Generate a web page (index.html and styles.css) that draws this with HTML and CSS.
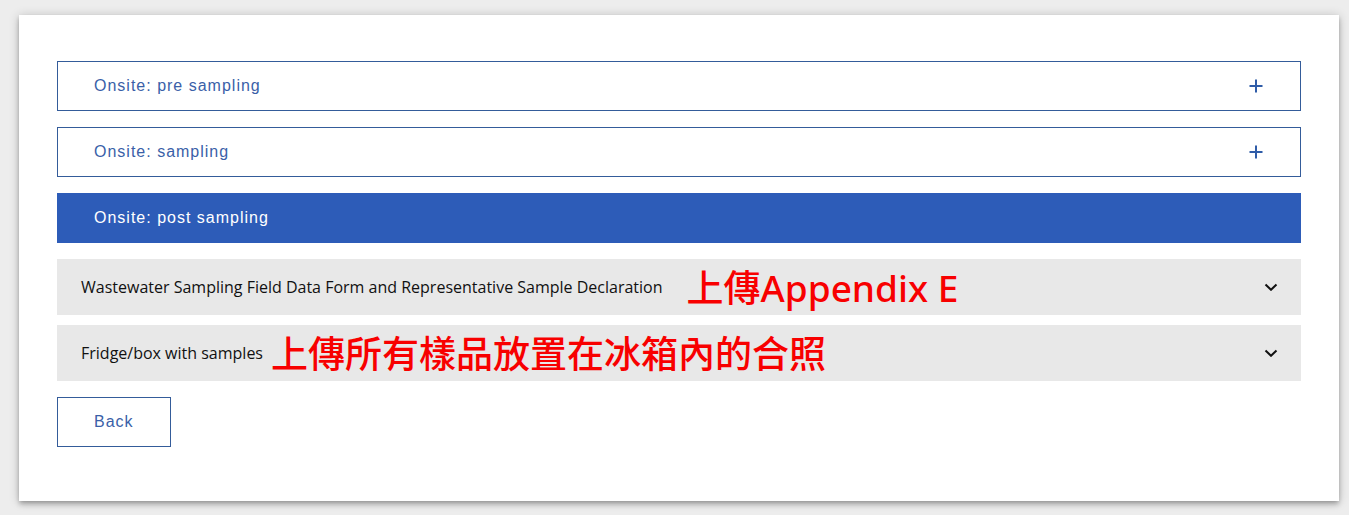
FILE: index.html
```html
<!DOCTYPE html>
<html lang="en">
<head>
<meta charset="utf-8">
<meta name="viewport" content="width=device-width, initial-scale=1">
<title>Onsite sampling</title>
<link rel="stylesheet" href="styles.css">
</head>
<body>
<main class="card">
  <div class="steps">
    <button class="step" type="button" aria-expanded="false">
      <span>Onsite: pre sampling</span>
      <svg class="plus" viewBox="0 0 16 16" aria-hidden="true"><path d="M8 1.500v13M1.500 8h13"/></svg>
    </button>
    <button class="step" type="button" aria-expanded="false">
      <span>Onsite: sampling</span>
      <svg class="plus" viewBox="0 0 16 16" aria-hidden="true"><path d="M8 1.500v13M1.500 8h13"/></svg>
    </button>
    <button class="step step-active" type="button" aria-expanded="true">
      <span>Onsite: post sampling</span>
    </button>
  </div>
  <div class="panels">
    <button class="panel" type="button" aria-expanded="false">
      <span class="panel-title">Wastewater Sampling Field Data Form and Representative Sample Declaration</span>
      <span class="note note-wide" lang="zh-Hant">上傳Appendix E</span>
      <svg class="chevron" viewBox="0 0 14 8" aria-hidden="true"><path d="M1.500 1.500L7 6.800l5.500-5.300"/></svg>
    </button>
    <button class="panel" type="button" aria-expanded="false">
      <span class="panel-title">Fridge/box with samples</span>
      <span class="note" lang="zh-Hant">上傳所有樣品放置在冰箱內的合照</span>
      <svg class="chevron" viewBox="0 0 14 8" aria-hidden="true"><path d="M1.500 1.500L7 6.800l5.500-5.300"/></svg>
    </button>
  </div>
  <button class="step back" type="button">Back</button>
</main>
</body>
</html>
```
FILE: styles.css
```css
* {
  box-sizing: border-box;
}

body {
  margin: 0;
  padding: 15px 10px 14px 19px;
  background: #ededed;
}

button {
  margin: 0;
  cursor: pointer;
  text-align: left;
}

.card {
  padding: 46px 38px 54px;
  background: #fff;
  box-shadow: 0 2px 4px -1px rgba(0, 0, 0, .2), 0 4px 5px 0 rgba(0, 0, 0, .14), 0 1px 10px 0 rgba(0, 0, 0, .2);
}

.steps {
  display: flex;
  flex-direction: column;
  gap: 16px;
}

.step {
  display: flex;
  align-items: center;
  justify-content: space-between;
  min-height: 50px;
  padding: 0 36px;
  border: 1px solid #345c9a;
  background: #fff;
  color: #3a5fa8;
  font: 16px/24px "Liberation Sans", Arial, sans-serif;
  letter-spacing: 1px;
}

.step-active {
  border-color: #2d5cb8;
  background: #2d5cb8;
  color: #fff;
}

.plus {
  width: 16px;
  height: 16px;
  fill: none;
  stroke: #2f5ca8;
  stroke-width: 2;
}

.panels {
  display: flex;
  flex-direction: column;
  gap: 10px;
  margin: 16px 0;
}

.panel {
  display: flex;
  align-items: center;
  gap: 8px;
  min-height: 56px;
  padding: 0 23px 0 24px;
  border: 0;
  background: #e8e8e8;
  color: #111;
  font: 16px/24px "Open Sans", sans-serif;
}

.note {
  padding-top: 2px;
  color: #f80000;
  font: 500 37px/48px "Noto Sans", "Noto Sans CJK TC", sans-serif;
}

.note-wide {
  margin-left: 16px;
}

.chevron {
  flex: none;
  width: 14px;
  height: 8px;
  margin-left: auto;
  fill: none;
  stroke: #111;
  stroke-width: 2;
}
```
